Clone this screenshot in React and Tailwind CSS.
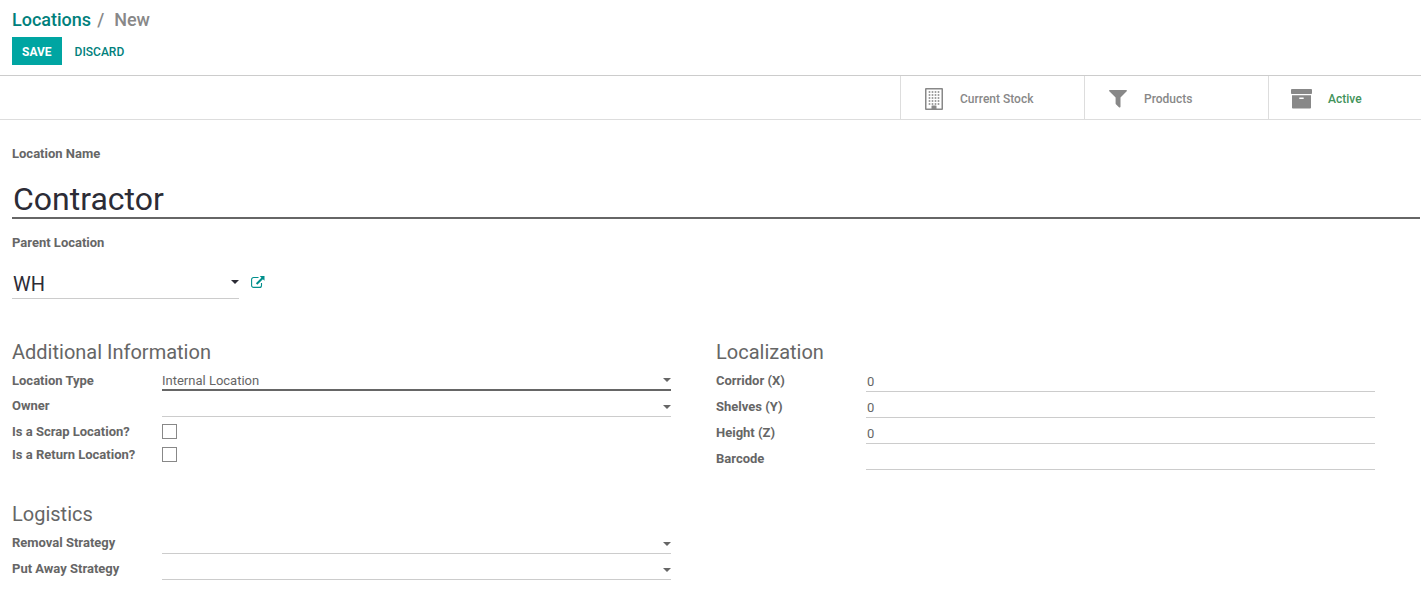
import clsx from "clsx";

function BuildingIcon() {
  const rows = [4, 7, 10, 13, 16];
  const cols = [4.5, 7.5, 10.5, 13.5];
  return (
    <svg width="18" height="22" viewBox="0 0 18 22" fill="currentColor" aria-hidden="true">
      <path fillRule="evenodd" d="M1 0h16a1 1 0 0 1 1 1v20a1 1 0 0 1-1 1H1a1 1 0 0 1-1-1V1a1 1 0 0 1 1-1zM1.500 1.500v19H6.500V18a.5.5 0 0 1 .5-.5h4a.5.5 0 0 1 .5.5v2.500h5v-19z" />
      {rows.map((y) =>
        cols.map((x) => <rect key={`${x}-${y}`} x={x - 0.8} y={y - 0.8} width="1.600" height="1.600" />)
      )}
    </svg>
  );
}

function FilterIcon() {
  return (
    <svg width="18" height="18" viewBox="0 0 18 18" fill="currentColor" aria-hidden="true">
      <path d="M.8 0h16.400c.7 0 1 .8.5 1.300L11.500 7.500v9.300c0 .7-.8 1.100-1.300.6l-3.300-3.200a.8.8 0 0 1-.3-.6V7.500L.3 1.300C-.2.800.100 0 .8 0z" />
    </svg>
  );
}

function ArchiveIcon() {
  return (
    <svg width="21" height="20" viewBox="0 0 21 20" fill="currentColor" aria-hidden="true">
      <path d="M.8 0h19.400c.4 0 .8.4.8.8v3.500c0 .4-.4.700-.8.700H.8c-.4 0-.8-.3-.8-.7V.8C0 .4.400 0 .8 0z" />
      <path fillRule="evenodd" d="M1 6.200h19v12.500c0 .5-.4.800-.8.800H1.800c-.4 0-.8-.3-.8-.8zM8.700 8.500a.8.8 0 0 0 0 1.500h3.600a.8.8 0 0 0 0-1.500z" />
    </svg>
  );
}

function ExternalLinkIcon() {
  return (
    <svg width="14" height="13" viewBox="0 0 14 13" aria-hidden="true">
      <path d="M7.500 1.500H2.600A2 2 0 0 0 .6 3.500v5.900a2 2 0 0 0 2 2h5.900a2 2 0 0 0 2-2V7" fill="none" stroke="currentColor" strokeWidth="1.100" />
      <path d="M8.800 0H13.500v4.700L11.900 3.200 6.300 8.700 4.900 7.300l5.500-5.600z" fill="currentColor" />
    </svg>
  );
}

function Caret({ className }) {
  return (
    <svg
      width="8"
      height="4"
      viewBox="0 0 8 4"
      fill="currentColor"
      aria-hidden="true"
      className={clsx("pointer-events-none absolute right-0", className)}
    >
      <path d="M0 0h8L4 4z" />
    </svg>
  );
}

function Row({ id, label, short, children }) {
  return (
    <div className="flex items-start pt-[5px]">
      <label htmlFor={id} className={clsx("w-[150px] shrink-0 font-bold", short ? "h-[18px]" : "h-5")}>
        {label}
      </label>
      {children}
    </div>
  );
}

function SelectRow({ id, label, options = [""], active }) {
  return (
    <Row id={id} label={label}>
      <div className="relative flex-1">
        <select
          id={id}
          className={clsx(
            "block w-full appearance-none bg-transparent outline-none",
            active ? "h-5 border-b-2 border-[#666]" : "h-[21px] border-b border-[#ccc]"
          )}
        >
          {options.map((o) => (
            <option key={o}>{o}</option>
          ))}
        </select>
        <Caret className={active ? "top-[7px]" : "top-[9px]"} />
      </div>
    </Row>
  );
}

function TextRow({ id, label, value = "" }) {
  return (
    <Row id={id} label={label}>
      <input
        id={id}
        type="text"
        defaultValue={value}
        className="block h-[21px] min-w-0 flex-1 border-b border-[#ccc] bg-transparent pt-px pl-px outline-none"
      />
    </Row>
  );
}

function CheckRow({ id, label }) {
  return (
    <Row id={id} label={label} short>
      <input
        id={id}
        type="checkbox"
        className="mt-0.5 size-[15px] appearance-none border border-[#888] bg-white checked:bg-[#00a09d]"
      />
    </Row>
  );
}

function StatButton({ icon, label, className }) {
  return (
    <button
      type="button"
      className={clsx("flex h-[43px] items-center border-l border-[#ddd] pt-0.5 font-medium", className)}
    >
      <span className="flex w-[65px] justify-center text-[#888]">{icon}</span>
      <span className="-ml-1.5">{label}</span>
    </button>
  );
}

function GroupTitle({ children }) {
  return <h2 className="h-7 text-[20px] leading-7">{children}</h2>;
}

export default function App() {
  return (
    <div className="min-h-screen bg-white font-[Roboto,sans-serif] text-[13px] leading-5 text-[#666]">
      <header className="border-b border-[#ccc] px-3 pt-2 pb-2.5">
        <nav className="mb-[5px] flex h-6 text-[18px] leading-6 font-medium text-[#888]">
          <a href="#locations" className="text-[#00807c]">
            Locations
          </a>
          <span className="px-1.5">/</span>
          <span className="pl-1">New</span>
        </nav>
        <div className="flex h-7 text-[12px] font-medium">
          <button type="button" className="bg-[#00a5a2] px-2.5 pt-0.5 font-bold text-white">
            SAVE
          </button>
          <button type="button" className="px-[13px] pt-0.5 text-[#00807c]">
            DISCARD
          </button>
        </div>
      </header>

      <div className="flex justify-end border-b border-[#ddd] text-[12px]">
        <StatButton icon={<BuildingIcon />} label="Current Stock" className="w-[184px] text-[#888]" />
        <StatButton icon={<FilterIcon />} label="Products" className="w-[184px] text-[#888]" />
        <StatButton icon={<ArchiveIcon />} label="Active" className="w-[153px] text-[#42935a]" />
      </div>

      <form className="pt-6 pr-px pb-3 pl-3">
        <label htmlFor="name" className="block font-bold">
          Location Name
        </label>
        <input
          id="name"
          type="text"
          defaultValue="Contractor"
          className="mt-4 block h-[39px] w-full border-b-2 border-[#666] pl-px text-[32px] text-[#2c2c36] outline-none"
        />

        <label htmlFor="parent" className="mt-3.5 block font-bold">
          Parent Location
        </label>
        <div className="mt-4 flex">
          <div className="relative w-[227px]">
            <select
              id="parent"
              className="block h-[30px] w-full appearance-none border-b border-[#ccc] bg-transparent pl-px text-[20px] text-[#2c2c36] outline-none"
            >
              <option>WH</option>
            </select>
            <Caret className="top-[11px] text-[#2c2c36]" />
          </div>
          <button type="button" aria-label="Open parent location" className="mb-1 ml-3 text-[#008f8c]">
            <ExternalLinkIcon />
          </button>
        </div>

        <div className="mt-[39px] grid grid-cols-2">
          <div className="pr-[45px]">
            <GroupTitle>Additional Information</GroupTitle>
            <SelectRow id="type" label="Location Type" options={["Internal Location"]} active />
            <SelectRow id="owner" label="Owner" />
            <CheckRow id="scrap" label="Is a Scrap Location?" />
            <CheckRow id="return" label="Is a Return Location?" />
          </div>
          <div className="pr-[45px]">
            <GroupTitle>Localization</GroupTitle>
            <TextRow id="corridor" label="Corridor (X)" value="0" />
            <TextRow id="shelves" label="Shelves (Y)" value="0" />
            <TextRow id="height" label="Height (Z)" value="0" />
            <TextRow id="barcode" label="Barcode" />
          </div>
          <div className="mt-[30px] pr-[45px]">
            <GroupTitle>Logistics</GroupTitle>
            <SelectRow id="removal" label="Removal Strategy" />
            <SelectRow id="putaway" label="Put Away Strategy" />
          </div>
        </div>
      </form>
    </div>
  );
}
